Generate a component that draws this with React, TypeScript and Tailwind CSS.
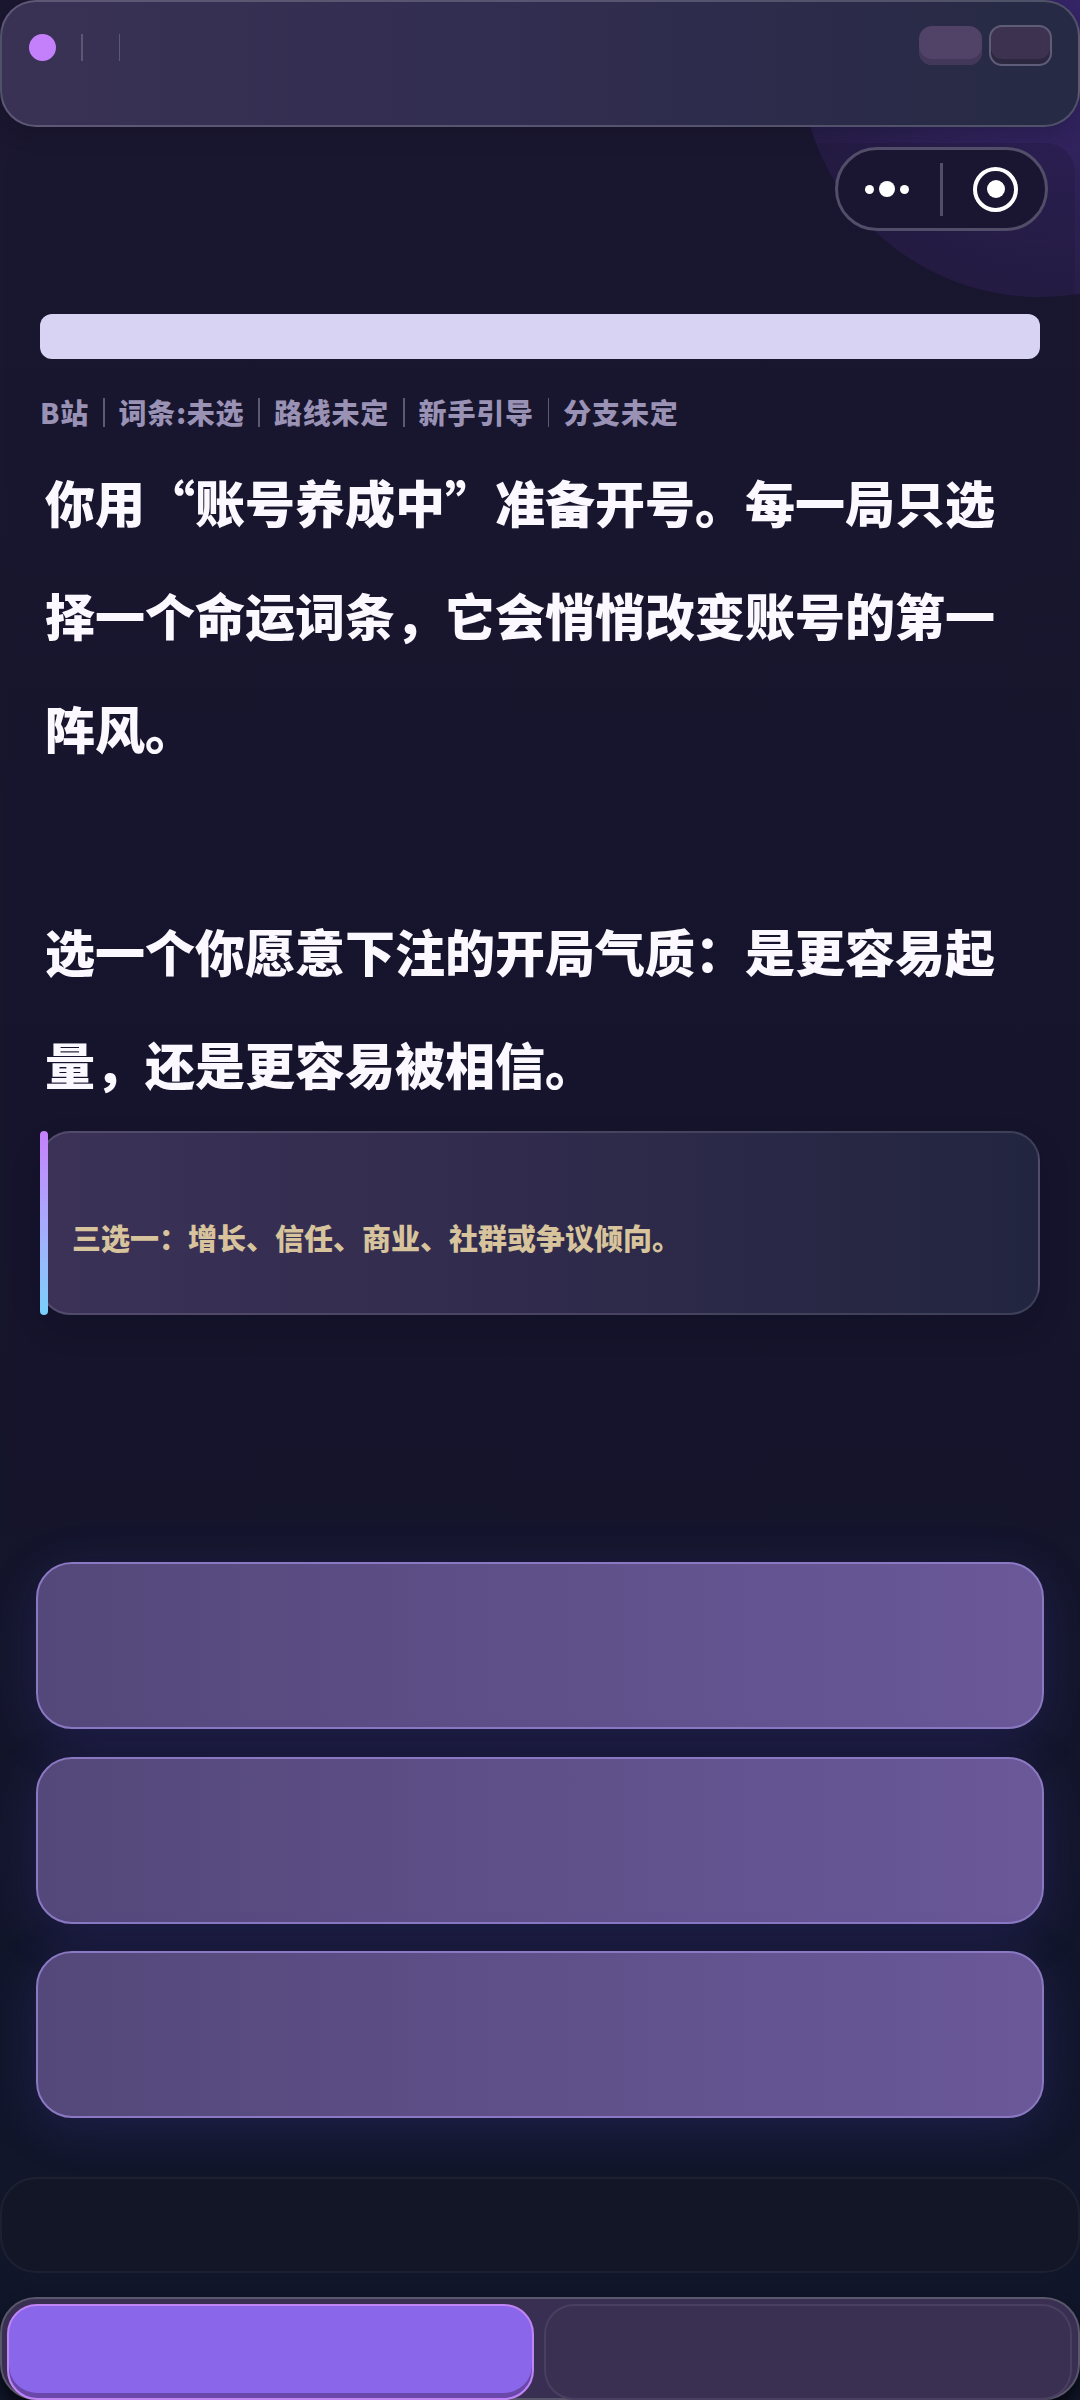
const metaItems = ['B站', '词条:未选', '路线未定', '新手引导', '分支未定']

function OptionCard() {
  return (
    <div className="h-[167px] rounded-[36px] border-2 border-[#8a78c2] bg-gradient-to-r from-[#54487a] to-[#6a5899] shadow-[0_10px_50px_rgba(92,72,210,0.2)]" />
  )
}

export default function App() {
  return (
    <div
      lang="zh-CN"
      className="relative flex h-[2400px] w-[1080px] flex-col overflow-hidden bg-gradient-to-b from-[#1b1730] via-[#15152b] to-[#10162a] font-['Noto_Sans_CJK_SC','Noto_Sans',sans-serif]"
    >
      {/* corner decoration */}
      <div className="absolute left-[800px] top-[-183px] h-[480px] w-[480px] rounded-full bg-[radial-gradient(circle_at_55%_45%,#38266c_0%,#2c2052_50%,#231a3c_100%)]" />

      {/* top bar */}
      <div className="relative flex h-[127px] shrink-0 items-start justify-between rounded-[36px] border-2 border-[#ffffff30] bg-gradient-to-r from-[#393255] via-[#312d50] to-[#262a44] shadow-[0_6px_20px_rgba(12,10,30,0.25)]">
        <div className="ml-[27px] mt-[32px] flex items-center">
          <div className="h-[27px] w-[27px] rounded-full bg-[#c480fb]" />
          <div className="ml-[25px] h-[27px] w-[1.5px] bg-[#ffffff30]" />
          <div className="ml-[36px] h-[27px] w-[1.5px] bg-[#ffffff30]" />
        </div>
        <div className="mr-[26px] mt-[23px] flex items-center gap-[7px]">
          <div className="h-[39px] w-[63px] rounded-[13px] bg-[#514268] shadow-[inset_0_-6px_0_#43375a]" />
          <div className="h-[41px] w-[63px] rounded-[13px] border-2 border-[#5f5c78] bg-[#3d3350] shadow-[inset_0_-5px_0_#2b2840]" />
        </div>
      </div>

      {/* wechat capsule */}
      <div className="absolute left-[835px] top-[147px] z-10 flex h-[84px] w-[213px] items-center rounded-full border-[3px] border-[#524d68] bg-[#1a1530]">
        <div className="flex w-[98px] items-center justify-center gap-[5px]">
          <span className="h-[9px] w-[9px] rounded-full bg-white" />
          <span className="h-[16px] w-[16px] rounded-full bg-white" />
          <span className="h-[9px] w-[9px] rounded-full bg-white" />
        </div>
        <div className="ml-[4px] h-[53px] w-[3px] bg-[#524d68]" />
        <div className="flex w-[102px] justify-center pl-[3px]">
          <div className="flex h-[45px] w-[45px] items-center justify-center rounded-full border-[4px] border-white">
            <span className="h-[18px] w-[18px] rounded-full bg-white" />
          </div>
        </div>
      </div>

      {/* main content */}
      <div className="relative mx-[5px] mt-[16px] h-[1397px] shrink-0 rounded-[30px] bg-[#17152e40] px-[35px] pt-[171px]">
        <div className="h-[45px] rounded-[12px] bg-[#d9d3f3]" />

        <div className="mt-[38px] flex h-[30px] items-center gap-[14px] text-[28px] font-black leading-[30px] tracking-[0.8px] text-[#9a92b5]">
          {metaItems.map((item, i) => (
            <div key={item} className="flex items-center gap-[14px]">
              {i > 0 && <span className="h-[29px] w-[1.5px] bg-[#5e5874]" />}
              <span>{item}</span>
            </div>
          ))}
        </div>

        <div className="mt-[18px] w-[960px] pl-[5px] text-[50px] font-black leading-[113px] text-[#fbf8ff]">
          <p>你用“账号养成中”准备开号。每一局只选择一个命运词条，它会悄悄改变账号的第一阵风。</p>
          <p className="mt-[110px]">选一个你愿意下注的开局气质：是更容易起量，还是更容易被相信。</p>
        </div>

        <div className="relative mt-[11px] flex h-[184px] items-center rounded-[30px] border-2 border-[#ffffff1f] bg-gradient-to-r from-[#3c3258] via-[#302b4c] to-[#222540] pl-[30px] pt-[30px] shadow-[0_14px_30px_rgba(10,10,30,0.2)]">
          <div className="absolute bottom-[-2px] left-[-2px] top-[-2px] w-[8px] rounded-full bg-gradient-to-b from-[#c480fb] to-[#77d0fb]" />
          <span className="text-[29px] font-black text-[#d8c49c]">三选一：增长、信任、商业、社群或争议倾向。</span>
        </div>
      </div>

      {/* options */}
      <div className="relative mx-[36px] mt-[22px] flex flex-col gap-[27.5px]">
        <OptionCard />
        <OptionCard />
        <OptionCard />
      </div>

      <div className="relative mt-[59px] h-[96px] shrink-0 rounded-[36px] border-2 border-[#ffffff0c] bg-[#121626]" />

      {/* bottom actions */}
      <div className="relative mt-[24px] grid h-[103px] shrink-0 grid-cols-[527px_528px] gap-[10px] rounded-[36px] border-2 border-[#5a566c] bg-[#392f52] px-[5px] pt-[5px] shadow-[0_8px_16px_rgba(0,0,0,0.7)]">
        <div className="h-[96px] rounded-[30px] border-[2.5px] border-[#c084f5] bg-[#8a66ea] shadow-[inset_0_-5px_0_#6a48aa]" />
        <div className="h-[96px] rounded-[30px] border-2 border-[#ffffff14] bg-[#3a3052]" />
      </div>
    </div>
  )
}
